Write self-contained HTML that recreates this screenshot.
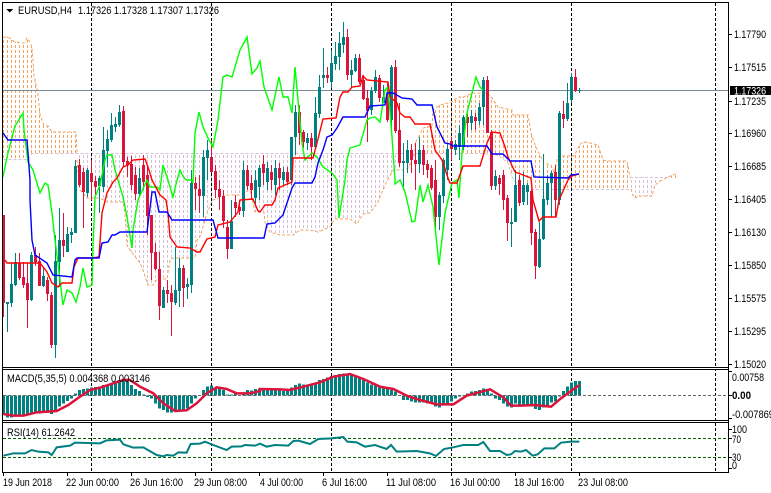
<!DOCTYPE html>
<html><head><meta charset="utf-8"><title>EURUSD,H4</title>
<style>
html,body{margin:0;padding:0;background:#fff;width:771px;height:493px;overflow:hidden}
svg{display:block}
text{font-family:"Liberation Sans",sans-serif;font-size:11px;fill:#000}
</style></head><body>
<svg width="771" height="493" viewBox="0 0 771 493" xmlns="http://www.w3.org/2000/svg" shape-rendering="crispEdges">
<defs>
<path id="h" fill="none" stroke-width="1" stroke-dasharray="3 2" d="M3.5 0V300M7.5 0V300M11.5 0V300M15.5 0V300M19.5 0V300M23.5 0V300M27.5 0V300M31.5 0V300M35.5 0V300M39.5 0V300M43.5 0V300M47.5 0V300M51.5 0V300M55.5 0V300M59.5 0V300M63.5 0V300M67.5 0V300M71.5 0V300M75.5 0V300M79.5 0V300M83.5 0V300M87.5 0V300M91.5 0V300M95.5 0V300M99.5 0V300M103.5 0V300M107.5 0V300M111.5 0V300M115.5 0V300M119.5 0V300M123.5 0V300M127.5 0V300M131.5 0V300M135.5 0V300M139.5 0V300M143.5 0V300M147.5 0V300M151.5 0V300M155.5 0V300M159.5 0V300M163.5 0V300M167.5 0V300M171.5 0V300M175.5 0V300M179.5 0V300M183.5 0V300M187.5 0V300M191.5 0V300M195.5 0V300M199.5 0V300M203.5 0V300M207.5 0V300M211.5 0V300M215.5 0V300M219.5 0V300M223.5 0V300M227.5 0V300M231.5 0V300M235.5 0V300M239.5 0V300M243.5 0V300M247.5 0V300M251.5 0V300M255.5 0V300M259.5 0V300M263.5 0V300M267.5 0V300M271.5 0V300M275.5 0V300M279.5 0V300M283.5 0V300M287.5 0V300M291.5 0V300M295.5 0V300M299.5 0V300M303.5 0V300M307.5 0V300M311.5 0V300M315.5 0V300M319.5 0V300M323.5 0V300M327.5 0V300M331.5 0V300M335.5 0V300M339.5 0V300M343.5 0V300M347.5 0V300M351.5 0V300M355.5 0V300M359.5 0V300M363.5 0V300M367.5 0V300M371.5 0V300M375.5 0V300M379.5 0V300M383.5 0V300M387.5 0V300M391.5 0V300M395.5 0V300M399.5 0V300M403.5 0V300M407.5 0V300M411.5 0V300M415.5 0V300M419.5 0V300M423.5 0V300M427.5 0V300M431.5 0V300M435.5 0V300M439.5 0V300M443.5 0V300M447.5 0V300M451.5 0V300M455.5 0V300M459.5 0V300M463.5 0V300M467.5 0V300M471.5 0V300M475.5 0V300M479.5 0V300M483.5 0V300M487.5 0V300M491.5 0V300M495.5 0V300M499.5 0V300M503.5 0V300M507.5 0V300M511.5 0V300M515.5 0V300M519.5 0V300M523.5 0V300M527.5 0V300M531.5 0V300M535.5 0V300M539.5 0V300M543.5 0V300M547.5 0V300M551.5 0V300M555.5 0V300M559.5 0V300M563.5 0V300M567.5 0V300M571.5 0V300M575.5 0V300M579.5 0V300M583.5 0V300M587.5 0V300M591.5 0V300M595.5 0V300M599.5 0V300M603.5 0V300M607.5 0V300M611.5 0V300M615.5 0V300M619.5 0V300M623.5 0V300M627.5 0V300M631.5 0V300M635.5 0V300M639.5 0V300M643.5 0V300M647.5 0V300M651.5 0V300M655.5 0V300M659.5 0V300M663.5 0V300M667.5 0V300M671.5 0V300M675.5 0V300"/>
<clipPath id="co"><polygon points="3,37 8,37 12,40 15,42 24,43 27,38 30,42 32,47 34,75 36,85 38,93 40,115 44,125 48,126 52,132 76,132 77,153 32,153 28,159 3,159"/><polygon points="415,153 415,143 417,140 423,128 432,126 433,110 440,105 452,102 458,97 463,97 473,93 487,93 492,98 498,107 512,110 513,115 528,115 531,133 536,147 544,163 551,165 554,173 558,156 574,156 581,143 586,142 598,145 603,160 607,161 627,161 630,177 631,189 531,189 520,188 512,177 508,163 498,155 483,153"/><polygon points="668,177 675,174 677,175 677,178 668,178"/></clipPath>
<clipPath id="ct"><polygon points="77,153 420,153 408,168 405,170 393,170 386,183 383,190 378,202 370,213 363,214 357,224 350,219 335,219 330,227 318,232 310,230 300,230 293,235 280,235 270,232 265,223 264,212 255,212 250,190 240,195 227,195 213,200 207,213 200,237 197,240 195,258 173,258 170,260 167,279 157,279 153,285 148,285 143,270 140,263 130,250 127,245 125,213 123,202 107,202 100,198 87,198 80,190 77,160"/><polygon points="630,177 665,178 668,178 662,180 655,185 652,196 640,196 634,198 631,189"/></clipPath>
</defs>
<rect width="771" height="493" fill="#fff"/>

<!-- cloud -->
<g clip-path="url(#co)"><use href="#h" stroke="#f4a460"/></g>
<g clip-path="url(#ct)"><use href="#h" stroke="#d8bfd8"/></g>
<g fill="none" stroke-width="1" stroke-dasharray="3 2">
<polyline stroke="#f4a460" points="3.5,37 8,37 12,40 15,42 24,43 27,38 30,42 32,47 34,75 36,85 38,93 40,115 44,125 48,126 52,132 76,132 77,153"/>
<polyline stroke="#d8bfd8" points="3.5,159.5 28,159.5 32,153.5 420,153.5"/>
<polyline stroke="#d8bfd8" points="420,153.5 483,153.5 498,155 508,163 512,177 520,188 531,189.5 631,189.5"/>
<polyline stroke="#f4a460" points="77,160 80,190 87,198 100,198 107,202 123,202 125,213 127,245 130,250 140,263 143,270 148,285 153,285 157,279 167,279 170,260 173,258 195,258 197,240 200,237 207,213 213,200 227,195 240,195 250,190 255,212 264,212 265,223 270,232 280,235 293,235 300,230 310,230 318,232 330,227 335,219 350,219 357,224 363,214 370,213 378,202 383,190 386,183 393,170 405,170 408,168 415,153 415,143 417,140 423,128 432,126 433,110 440,105 452,102 458,97 463,97 473,93 487,93 492,98 498,107 512,110 513,115 528,115 531,133 536,147 544,163 551,165 554,173 558,156 574,156 581,143 586,142 598,145 603,160 607,161 627,161 630,177"/>
<polyline stroke="#d8bfd8" points="630,177.5 668,177.5"/>
<polyline stroke="#f4a460" points="631,189 634,198 640,196 652,196 655,185 662,180 668,177 675,174 677,175"/>
</g>

<!-- grid verticals -->
<g stroke="#000" stroke-width="1" stroke-dasharray="3 2" fill="none">
<path d="M91.5 3V472M211.5 3V472M331.5 3V472M451.5 3V472M571.5 3V472M715.5 3V472"/>
</g>
<line x1="3" x2="728" y1="90.5" y2="90.5" stroke="#778899"/>

<!-- candle wicks -->
<g transform="translate(.5,0)" stroke-width="1" fill="none">
<path stroke="#008080" d="M7 302V332M11 263V307M15 253V286M31 252V301M43 267V287M55 235V358M59 208V287M67 227V252M71 228V243M75 160V233M87 168V197M99 176V213M103 127V192M107 130V167M111 113V142M115 117V132M119 105V127M139 168V197M163 287V308M175 247V305M179 258V307M187 278V299M191 170V293M203 150V217M207 140V180M231 200V249M243 161V217M255 170V205M259 165V200M267 162V190M275 160V195M283 167V185M291 137V185M295 105V155M307 133V150M315 97V150M319 75V118M323 48V88M331 50V88M335 42V70M339 32V70M343 22V53M351 60V88M355 54V72M371 87V115M375 70V93M383 85V103M391 65V133M403 143V190M407 140V173M419 137V173M439 192V230M443 158V203M447 143V180M455 140V155M459 125V160M463 115V150M471 110V130M479 103V125M483 77V125M495 170V190M511 208V247M515 170V222M523 172V205M527 183V205M539 222V268M543 154V240M547 175V205M551 171V217M559 111V205M567 83V121M571 73V103M579 88V93"/>
<path stroke="#dc143c" d="M3 215V317M19 253V280M23 262V288M27 263V328M35 247V266M39 253V286M47 277V301M51 292V348M63 213V257M79 159V187M83 168V228M91 160V200M95 176V195M123 106V167M127 157V177M131 156V190M135 167V200M143 155V190M147 165V235M151 215V280M155 243V270M159 252V320M167 280V303M171 285V336M183 265V307M195 177V210M199 175V213M211 140V173M215 165V198M219 180V210M223 190V228M227 220V259M235 195V217M239 200V215M247 165V190M251 175V200M263 155V185M271 165V190M279 163V190M287 167V185M299 105V145M303 130V148M311 133V160M327 67V83M347 29V80M359 54V84M363 75V100M367 90V142M379 75V102M387 83V122M395 60V133M399 103V167M411 144V173M415 143V190M423 145V175M427 160V178M431 165V190M435 160V233M451 137V160M467 113V137M475 113V130M487 76V133M491 130V190M499 175V195M503 170V210M507 195V241M519 175V206M531 190V245M535 229V279M555 165V217M563 101V128M575 69V92"/>
</g>
<!-- candle bodies -->
<g transform="translate(.5,0)" stroke-width="3" fill="none">
<path stroke="#008080" d="M7 302V304M11 284V303M15 262V285M31 255V300M43 276V286M55 261V345M59 240V262M67 234V252M71 232V235M75 166V233M87 170V193M99 178V186M103 150V187M107 139V151M111 125V140M115 124V127M119 112V125M139 178V194M163 290V308M175 290V303M179 268V291M187 284V287M191 183V285M203 157V196M207 150V158M231 221V249M243 170V211M255 180V198M259 168V187M267 168V182M275 168V185M283 172V180M291 137V180M295 112V137M307 138V143M315 113V147M319 87V114M323 75V78M331 63V82M335 56V64M339 43V57M343 37V45M351 70V75M355 58V71M371 91V110M375 77V91M383 97V103M391 67V120M403 161V163M407 150V163M419 150V164M439 195V217M443 160V196M447 149V170M455 144V150M459 133V147M463 117V147M471 116V123M479 107V121M483 80V107M495 176V186M511 222V224M515 185V222M523 185V202M527 185V192M539 239V267M543 199V239M547 183V200M551 173V183M559 113V200M567 103V119M571 77V100M579 90V91"/>
<path stroke="#dc143c" d="M3 215V303M19 263V278M23 277V285M27 283V300M35 255V262M39 261V286M47 280V294M51 295V345M63 240V246M79 165V185M83 172V192M91 173V182M95 181V187M123 111V162M127 161V165M131 164V185M135 175V194M143 165V182M147 175V216M151 215V253M155 252V269M159 269V306M167 290V294M171 293V302M183 268V288M195 183V189M199 189V196M211 157V172M215 171V190M219 189V197M223 196V221M227 227V249M235 202V208M239 207V211M247 170V186M251 183V190M263 164V173M271 172V180M279 168V178M287 172V182M299 112V133M303 132V142M311 138V147M327 75V78M347 37V75M359 58V82M363 80V99M367 98V111M379 78V98M387 97V120M395 67V131M399 130V163M411 150V160M415 160V164M423 150V165M427 164V170M431 168V188M435 180V217M451 141V149M467 117V123M475 117V121M487 80V133M491 132V186M499 178V184M503 175V200M507 198V223M519 180V203M531 191V233M535 232V266M555 172V200M563 114V119M575 77V91"/>
</g>

<!-- ichimoku lines -->
<g fill="none" stroke-width="1.4" shape-rendering="auto">
<polyline stroke="#00ff00" points="3,177 7,157 15,126 23,113 24,130 28,162 33,170 36,180 40,193 45,183 48,185 52,213 55,240 59,272 63,305 67,290 72,293 76,302 80,287 83,268 87,287 92,285 93,247 95,197 100,185 105,160 107,155 112,155 115,170 118,180 123,197 127,217 132,248 133,230 138,200 147,180 150,187 157,187 160,190 163,165 168,180 173,197 177,180 180,170 184,178 187,180 192,180 193,183 195,133 199,112 203,127 208,138 213,147 218,120 223,77 227,75 232,77 240,50 247,37 252,74 257,68 260,61 264,87 272,110 279,77 283,97 288,97 292,113 295,67 298,100 302,143 305,160 312,153 317,157 323,167 332,173 337,180 339,218 345,180 347,160 350,148 360,145 367,120 370,118 375,117 380,122 385,90 388,87 392,137 395,180 395,184 400,180 405,192 412,222 415,221 420,185 423,202 428,185 433,207 439,265 445,213 452,183 457,180 459,198 462,153 467,113 476,77 480,87 483,90"/>
<polyline stroke="#ff0000" points="5,260 7,263 40,263 47,272 52,283 58,287 62,283 72,283 74,267 78,258 92,258 99,257 102,213 107,193 113,182 117,178 123,167 128,165 133,160 145,159 148,167 152,180 160,195 166,200 168,213 170,237 177,247 190,248 197,252 200,252 207,239 215,237 218,225 230,222 238,212 240,200 253,199 258,211 260,212 265,205 272,205 275,200 278,188 285,185 292,182 293,158 313,158 317,143 323,119 336,118 340,97 343,92 348,92 352,87 360,86 363,76 367,80 388,82 390,97 397,103 400,113 405,117 410,117 415,124 430,124 435,150 442,160 448,178 450,183 457,183 463,166 480,166 487,143 492,132 500,133 505,147 508,157 515,172 531,178 533,200 539,221 543,217 556,217 559,200 568,180 572,176 579,174"/>
<polyline stroke="#0000ff" points="3,133 8,140 27,140 28,153 30,180 30,200 32,240 35,255 47,263 53,275 72,277 75,260 77,258 99,258 102,243 108,242 112,235 115,235 120,232 147,232 152,192 155,192 159,212 167,212 172,220 213,220 218,238 264,238 267,224 275,223 283,215 292,188 295,183 312,183 315,177 318,163 323,150 327,137 332,135 337,128 343,117 365,117 370,106 385,105 387,93 393,93 402,98 412,99 417,105 432,105 437,127 442,137 445,143 450,144 453,146 487,146 492,154 503,154 510,161 531,161 534,177 568,178 571,175 579,174"/>
</g>

<!-- MACD histogram -->
<g transform="translate(0,365) scale(.33333)" fill="none">
<path stroke="#008080" stroke-width="9" d="M10.5 91V150M22.5 91V158M34.5 91V158M46.5 91V155M58.5 91V152M70.5 91V150M82.5 91V150M94.5 91V148M106.5 91V145M118.5 91V145M130.5 91V143M142.5 91V140M154.5 91V147M166.5 91V135M178.5 91V125M190.5 91V115M202.5 91V108M214.5 91V100M226.5 91V85M238.5 91V75M250.5 91V72M262.5 91V70M274.5 91V68M286.5 91V66M298.5 91V64M310.5 91V60M322.5 91V58M334.5 91V55M346.5 91V50M358.5 91V45M370.5 91V42M382.5 91V50M394.5 91V60M406.5 91V72M418.5 91V78M430.5 91V88M442.5 91V96M454.5 91V100M466.5 91V115M478.5 91V130M490.5 91V135M502.5 91V142M514.5 91V143M526.5 91V140M538.5 91V138M550.5 91V138M562.5 91V130M574.5 91V115M586.5 91V100M598.5 91V90M610.5 91V75M622.5 91V65M634.5 91V62M646.5 91V68M658.5 91V72M670.5 91V75M682.5 91V88M694.5 91V88M706.5 91V85M718.5 91V90M730.5 91V85M742.5 91V75M754.5 91V77M766.5 91V72M778.5 91V70"/>
<path transform="translate(780,0)" stroke="#008080" stroke-width="9" d="M10.5 91V72M22.5 91V72M34.5 91V72M46.5 91V75M58.5 91V75M70.5 91V78M82.5 91V75M94.5 91V68M106.5 91V60M118.5 91V55M130.5 91V58M142.5 91V58M154.5 91V55M166.5 91V55M178.5 91V45M190.5 91V42M202.5 91V38M214.5 91V33M226.5 91V30M238.5 91V27M250.5 91V25M262.5 91V27M274.5 91V30M286.5 91V32M298.5 91V38M310.5 91V45M322.5 91V52M334.5 91V58M346.5 91V62M358.5 91V65M370.5 91V68M382.5 91V72M394.5 91V75M406.5 91V80M418.5 91V92M430.5 91V105M442.5 91V105M454.5 91V110M466.5 91V113M478.5 91V113M490.5 91V113M502.5 91V115M514.5 91V117M526.5 91V125M538.5 91V128M550.5 91V118M562.5 91V115M574.5 91V110M586.5 91V100M598.5 91V95M610.5 91V90M622.5 91V85M634.5 91V80M646.5 91V78M658.5 91V75M670.5 91V70M682.5 91V75M694.5 91V85M706.5 91V100M718.5 91V105M730.5 91V115M742.5 91V125M754.5 91V128M766.5 91V115M778.5 91V125"/>
<path transform="translate(1533,0)" stroke="#008080" stroke-width="9" d="M37.5 91V125M49.5 91V125M61.5 91V125M73.5 91V132M85.5 91V135M97.5 91V128M109.5 91V125M121.5 91V112M133.5 91V110M145.5 91V95M157.5 91V78M169.5 91V65M181.5 91V52M193.5 91V48M205.5 91V48"/>
</g>
<line x1="3" x2="728" y1="395.5" y2="395.5" stroke="#666" stroke-dasharray="3 2"/>
<g transform="translate(0,365) scale(.33333)" fill="none" stroke="#dc143c" stroke-width="7.5" shape-rendering="auto">
<polyline points="10,147 40,152 70,152 110,142 170,138 205,120 240,95 270,75 300,68 340,55 370,45 390,45 420,65 460,85 490,115 525,138 560,136 590,115 620,85 650,67 680,72 710,85 750,85 780,78 780,72 840,73 870,75 910,65 960,52 1000,35 1050,27 1090,42 1140,65 1180,72 1220,92 1260,105 1310,118 1360,118 1400,92 1470,73 1510,97 1533,122 1563,122 1603,120 1653,125 1683,100 1738,60"/>
</g>

<!-- RSI -->
<g stroke="#006400" stroke-dasharray="3 2">
<line x1="3" x2="728" y1="438.5" y2="438.5"/>
<line x1="3" x2="728" y1="457.5" y2="457.5"/>
</g>
<g transform="translate(0,365) scale(.33333)" fill="none" stroke="#008080" stroke-width="6" shape-rendering="auto">
<polyline points="10,272 40,265 75,265 95,255 115,260 145,262 155,270 170,247 210,242 225,233 300,235 320,226 360,224 370,238 400,248 430,247 470,270 490,274 500,270 520,272 535,262 560,263 572,237 600,236 615,230 640,240 680,255 695,245 725,244 735,240 765,242 780,236 800,245 825,240 865,242 880,228 895,227 930,237 955,222 995,220 1030,216 1042,230 1070,232 1095,245 1125,240 1160,252 1173,240 1190,260 1250,258 1290,265 1308,273 1332,252 1360,247 1390,240 1435,240 1450,231 1470,258 1500,258 1520,270 1533,268 1545,258 1563,260 1578,255 1598,272 1613,268 1633,250 1663,250 1683,233 1713,230 1738,230"/>
</g>

<!-- frames -->
<g fill="#000">
<rect x="2" y="2" width="727" height="1"/>
<rect x="2" y="2" width="1" height="471"/>
<rect x="728" y="2" width="1" height="471"/>
<rect x="2" y="367" width="727" height="1"/><rect x="3" y="368" width="725" height="1" fill="#fff"/>
<rect x="2" y="369" width="727" height="1"/>
<rect x="2" y="420" width="727" height="1"/><rect x="3" y="421" width="725" height="1" fill="#fff"/>
<rect x="2" y="422" width="727" height="1"/>
<rect x="2" y="472" width="727" height="1"/>
</g>
<path stroke="#000" fill="none" d="M729 34.5h3M729 67.5h3M729 101.5h3M729 133.5h3M729 166.5h3M729 199.5h3M729 232.5h3M729 265.5h3M729 298.5h3M729 331.5h3M729 364.5h3M729 371.5h3M729 395.5h3M729 418.5h3M729 429.5h3M729 438.5h3M729 457.5h3M729 468.5h3M3.5 473v3M67.5 473v3M131.5 473v3M195.5 473v3M259.5 473v3M323.5 473v3M387.5 473v3M451.5 473v3M515.5 473v3M579.5 473v3"/>

<!-- price box -->
<rect x="730" y="86" width="41" height="9" fill="#000"/>
<polygon points="6,9 13,9 9.5,12.5" fill="#000"/>

<g shape-rendering="auto">
<text x="18" y="14" textLength="54" lengthAdjust="spacingAndGlyphs">EURUSD,H4</text>
<text x="78" y="14" textLength="141" lengthAdjust="spacingAndGlyphs">1.17326 1.17328 1.17307 1.17326</text>
<text x="734" y="38" textLength="32" lengthAdjust="spacingAndGlyphs">1.17790</text>
<text x="734" y="71" textLength="32" lengthAdjust="spacingAndGlyphs">1.17515</text>
<text x="734" y="105" textLength="32" lengthAdjust="spacingAndGlyphs">1.17235</text>
<text x="734" y="137" textLength="32" lengthAdjust="spacingAndGlyphs">1.16960</text>
<text x="734" y="170" textLength="32" lengthAdjust="spacingAndGlyphs">1.16685</text>
<text x="734" y="203" textLength="32" lengthAdjust="spacingAndGlyphs">1.16405</text>
<text x="734" y="236" textLength="32" lengthAdjust="spacingAndGlyphs">1.16130</text>
<text x="734" y="269" textLength="32" lengthAdjust="spacingAndGlyphs">1.15850</text>
<text x="734" y="302" textLength="32" lengthAdjust="spacingAndGlyphs">1.15575</text>
<text x="734" y="335" textLength="32" lengthAdjust="spacingAndGlyphs">1.15295</text>
<text x="734" y="368" textLength="32" lengthAdjust="spacingAndGlyphs">1.15020</text>
<text x="734" y="94.5" textLength="32" lengthAdjust="spacingAndGlyphs" style="fill:#fff">1.17326</text>
<text x="7" y="382" textLength="143" lengthAdjust="spacingAndGlyphs">MACD(5,35,5) 0.004368 0.003146</text>
<text x="732" y="381" textLength="32" lengthAdjust="spacingAndGlyphs">0.00758</text>
<text x="732" y="399" textLength="19" lengthAdjust="spacingAndGlyphs" font-weight="bold">0.00</text>
<text x="732" y="418" textLength="42" lengthAdjust="spacingAndGlyphs">-0.007869</text>
<text x="7" y="436" textLength="68" lengthAdjust="spacingAndGlyphs">RSI(14) 61.2642</text>
<text x="732" y="433" textLength="15" lengthAdjust="spacingAndGlyphs">100</text>
<text x="732" y="443" textLength="9" lengthAdjust="spacingAndGlyphs">70</text>
<text x="732" y="461" textLength="9" lengthAdjust="spacingAndGlyphs">30</text>
<text x="732" y="469" textLength="5" lengthAdjust="spacingAndGlyphs">0</text>
<text x="3" y="486" textLength="49" lengthAdjust="spacingAndGlyphs">19 Jun 2018</text>
<text x="66" y="486" textLength="53" lengthAdjust="spacingAndGlyphs">22 Jun 00:00</text>
<text x="130" y="486" textLength="53" lengthAdjust="spacingAndGlyphs">26 Jun 16:00</text>
<text x="194" y="486" textLength="53" lengthAdjust="spacingAndGlyphs">29 Jun 08:00</text>
<text x="260" y="486" textLength="43" lengthAdjust="spacingAndGlyphs">4 Jul 00:00</text>
<text x="322" y="486" textLength="45" lengthAdjust="spacingAndGlyphs">6 Jul 16:00</text>
<text x="386" y="486" textLength="50" lengthAdjust="spacingAndGlyphs">11 Jul 08:00</text>
<text x="450" y="486" textLength="50" lengthAdjust="spacingAndGlyphs">16 Jul 00:00</text>
<text x="514" y="486" textLength="50" lengthAdjust="spacingAndGlyphs">18 Jul 16:00</text>
<text x="578" y="486" textLength="50" lengthAdjust="spacingAndGlyphs">23 Jul 08:00</text>
</g>
</svg>
</body></html>
